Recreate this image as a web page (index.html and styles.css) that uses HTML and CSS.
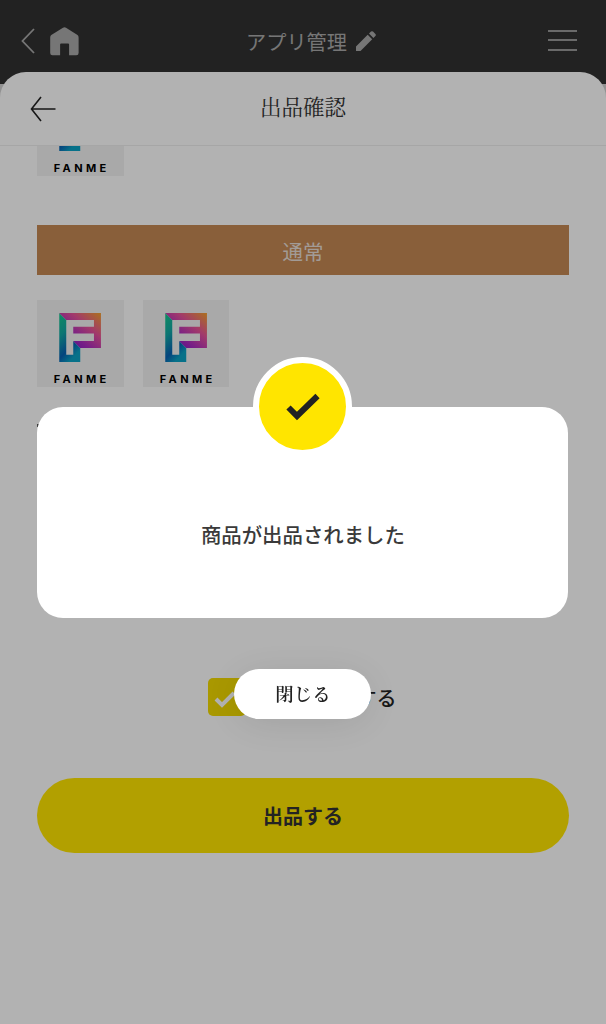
FILE: index.html
```html
<!DOCTYPE html>
<html lang="ja">

<head>
  <meta charset="UTF-8">
  <title>出品確認</title>
  <link rel="stylesheet" href="styles.css">
</head>

<body>
  <!-- logo shared by all the item tiles -->
  <svg class="defs" width="0" height="0">
    <defs>
      <linearGradient id="cool" x1="0" y1="0" x2="0.45" y2="1">
        <stop offset="0" stop-color="#16c98c" />
        <stop offset="0.4" stop-color="#12a9a5" />
        <stop offset="0.78" stop-color="#0862b4" />
        <stop offset="1" stop-color="#09a2c4" />
      </linearGradient>
      <linearGradient id="warm" x1="0" y1="1" x2="1" y2="0">
        <stop offset="0" stop-color="#6b16c8" />
        <stop offset="0.35" stop-color="#a92bc2" />
        <stop offset="0.65" stop-color="#e8539a" />
        <stop offset="1" stop-color="#f6a22c" />
      </linearGradient>
      <symbol id="logo" viewBox="0 0 86 87">
        <path fill="url(#cool)" d="M22 13l7 7v34.7h7V41l7 7v14H22z" />
        <path fill="url(#warm)" d="M22 13h41.7v35H43l-7-7h20.7v-7.5H36v-6.7h20.7V20H29z" />
        <text x="16.5" y="83.3" textLength="52.5" class="logo-text">FANME</text>
      </symbol>
    </defs>
  </svg>

  <header class="header">
    <div class="header-nav">
      <svg width="14" height="26" viewBox="0 0 14 26"><path d="M13 1L1.5 13 13 25" fill="none" stroke="#aaa" stroke-width="1.8" /></svg>
      <svg width="29" height="29" viewBox="0 0 29 29"><path d="M13 .8q1.5-1.2 3 0l11.5 7.3q1.1.9 1.1 2.4V26q0 2.3-2.3 2.3h-7.2V17.5q0-1-1-1h-7q-1 0-1 1v10.8H2.500Q.2 28.300.2 26V10.500q0-1.500 1.100-2.400z" fill="#aaa" /></svg>
    </div>
    <div class="header-title">
      <span>アプリ管理</span>
      <svg width="20" height="20" viewBox="0 0 20 20"><path d="M0 20v-4.500L11.700 3.800l4.500 4.500L4.500 20zM13 2.500L15 .6q1-.9 2 0L19.400 3q.9 1 0 2l-2 2z" fill="#aaa" /></svg>
    </div>
    <div class="menu">
      <i></i>
      <i></i>
      <i></i>
    </div>
  </header>

  <main class="sheet">
    <div class="sheet-header">
      <svg width="26" height="26" viewBox="0 0 26 26"><path d="M11 1L1.500 13 11 25M1.500 13H25.500" fill="none" stroke="#222" stroke-width="1.600" /></svg>
      <h1>出品確認</h1>
    </div>

    <div class="sheet-body">
      <div class="tiles tiles-top">
        <svg class="tile"><use href="#logo" /></svg>
      </div>
      <div class="rank">通常</div>
      <div class="tiles">
        <svg class="tile"><use href="#logo" /></svg>
        <svg class="tile"><use href="#logo" /></svg>
      </div>
      <div class="marker"></div>
      <label class="agree">
        <span class="checkbox">
          <svg width="24" height="20" viewBox="0 0 24 20"><path d="M3 10l6 6L21 4" fill="none" stroke="#fff" stroke-width="4" /></svg>
        </span>
        <span>する</span>
      </label>
      <button class="submit">出品する</button>
    </div>
  </main>

  <div class="overlay">
    <div class="modal">
      <div class="badge">
        <svg width="34" height="28" viewBox="0 0 34 28"><path d="M2.500 14.500l8.500 8.500L31.500 3" fill="none" stroke="#222" stroke-width="6" /></svg>
      </div>
      <p>商品が出品されました</p>
    </div>
    <button class="close">閉じる</button>
  </div>
</body>

</html>
```
FILE: styles.css
```css
* {
  box-sizing: border-box;
}

body {
  margin: 0;
  height: 1024px;
  overflow: hidden;
  background: #d0d0d0;
  color: #222;
  font-family: "Noto Sans CJK JP", sans-serif;
}

svg {
  display: block;
}

.defs {
  position: absolute;
}

.header {
  display: grid;
  grid-template-columns: 1fr auto 1fr;
  align-items: center;
  height: 84px;
  padding: 0 29px 2px 21px;
  background: #323232;
  color: #aaa;
}

.header-nav,
.header-title {
  display: flex;
  align-items: center;
  gap: 15px;
}

.header-title {
  gap: 9px;
  padding-left: 24px;
  font-size: 20.200px;
}

.menu {
  display: flex;
  flex-direction: column;
  gap: 7.500px;
  justify-self: end;
  width: 29px;
  margin-top: -2px;
}

.menu i {
  height: 2px;
  background: #999;
}

.sheet {
  position: relative;
  height: 952px;
  margin-top: -12px;
  border-radius: 26px 26px 0 0;
  background: #fff;
}

.sheet-header {
  display: grid;
  grid-template-columns: 1fr auto 1fr;
  align-items: center;
  height: 74px;
  padding: 0 30px;
  border-bottom: 1px solid #eee;
}

.sheet-header h1 {
  margin: -6px 0 0;
  color: #333;
  font: 400 21.500px "Noto Serif CJK JP", "Noto Serif JP", "Noto Sans CJK JP", serif;
}

.sheet-body {
  height: 878px;
  padding: 0 37.400px;
  overflow: hidden;
}

.tiles {
  display: flex;
  gap: 19px;
  margin-top: 25px;
}

.tiles-top {
  margin-top: -57px;
}

.tile {
  width: 86.500px;
  height: 87px;
  background: #f3f3f3;
}

.logo-text {
  font: 700 11px Inter, Arial, sans-serif;
  fill: #000;
}

.rank {
  height: 50px;
  margin-top: 49.400px;
  background: #c48853;
  color: #e9dfd7;
  font-size: 20.500px;
  line-height: 52px;
  text-align: center;
}

.marker {
  width: 2px;
  height: 3px;
  margin-top: 37px;
  background: #555;
}

.agree {
  display: flex;
  align-items: center;
  justify-content: space-between;
  width: 188px;
  height: 38px;
  margin: 251px 0 0 171px;
  font-size: 20px;
  font-weight: 500;
}

.checkbox {
  display: flex;
  align-items: center;
  width: 38px;
  height: 38px;
  padding: 3px 0 0 5px;
  border-radius: 5px;
  background: #f2da00;
}

.submit {
  display: block;
  width: 100%;
  height: 75px;
  margin-top: 62px;
  padding: 0;
  border: 0;
  border-radius: 38px;
  background: #ffe500;
  color: #333;
  font: bold 20px "Noto Sans CJK JP", sans-serif;
}

.overlay {
  position: fixed;
  inset: 0;
  display: flex;
  flex-direction: column;
  align-items: center;
  padding: 406.500px 0.200px 0 0;
  background: rgba(0, 0, 0, 0.3);
}

.modal {
  position: relative;
  display: flex;
  align-items: center;
  justify-content: center;
  width: 531px;
  height: 211.500px;
  padding-top: 43px;
  border-radius: 26px;
  background: #fff;
}

.modal p {
  margin: 0;
  color: #3a3a3a;
  font-size: 20.400px;
  font-weight: 500;
}

.badge {
  position: absolute;
  top: -49.500px;
  left: 216px;
  display: flex;
  align-items: center;
  justify-content: center;
  width: 99px;
  height: 99px;
  border: 6px solid #fff;
  border-radius: 50%;
  background: #ffe500;
}

.close {
  width: 137px;
  height: 50px;
  margin-top: 51px;
  padding: 0 0 3px;
  border: 0;
  border-radius: 25px;
  background: #fff;
  box-shadow: 0 5px 40px rgba(0, 0, 0, 0.1);
  color: #222;
  font: 600 18.500px "Noto Serif CJK JP", "Noto Serif JP", "Noto Sans CJK JP", serif;
}
```
